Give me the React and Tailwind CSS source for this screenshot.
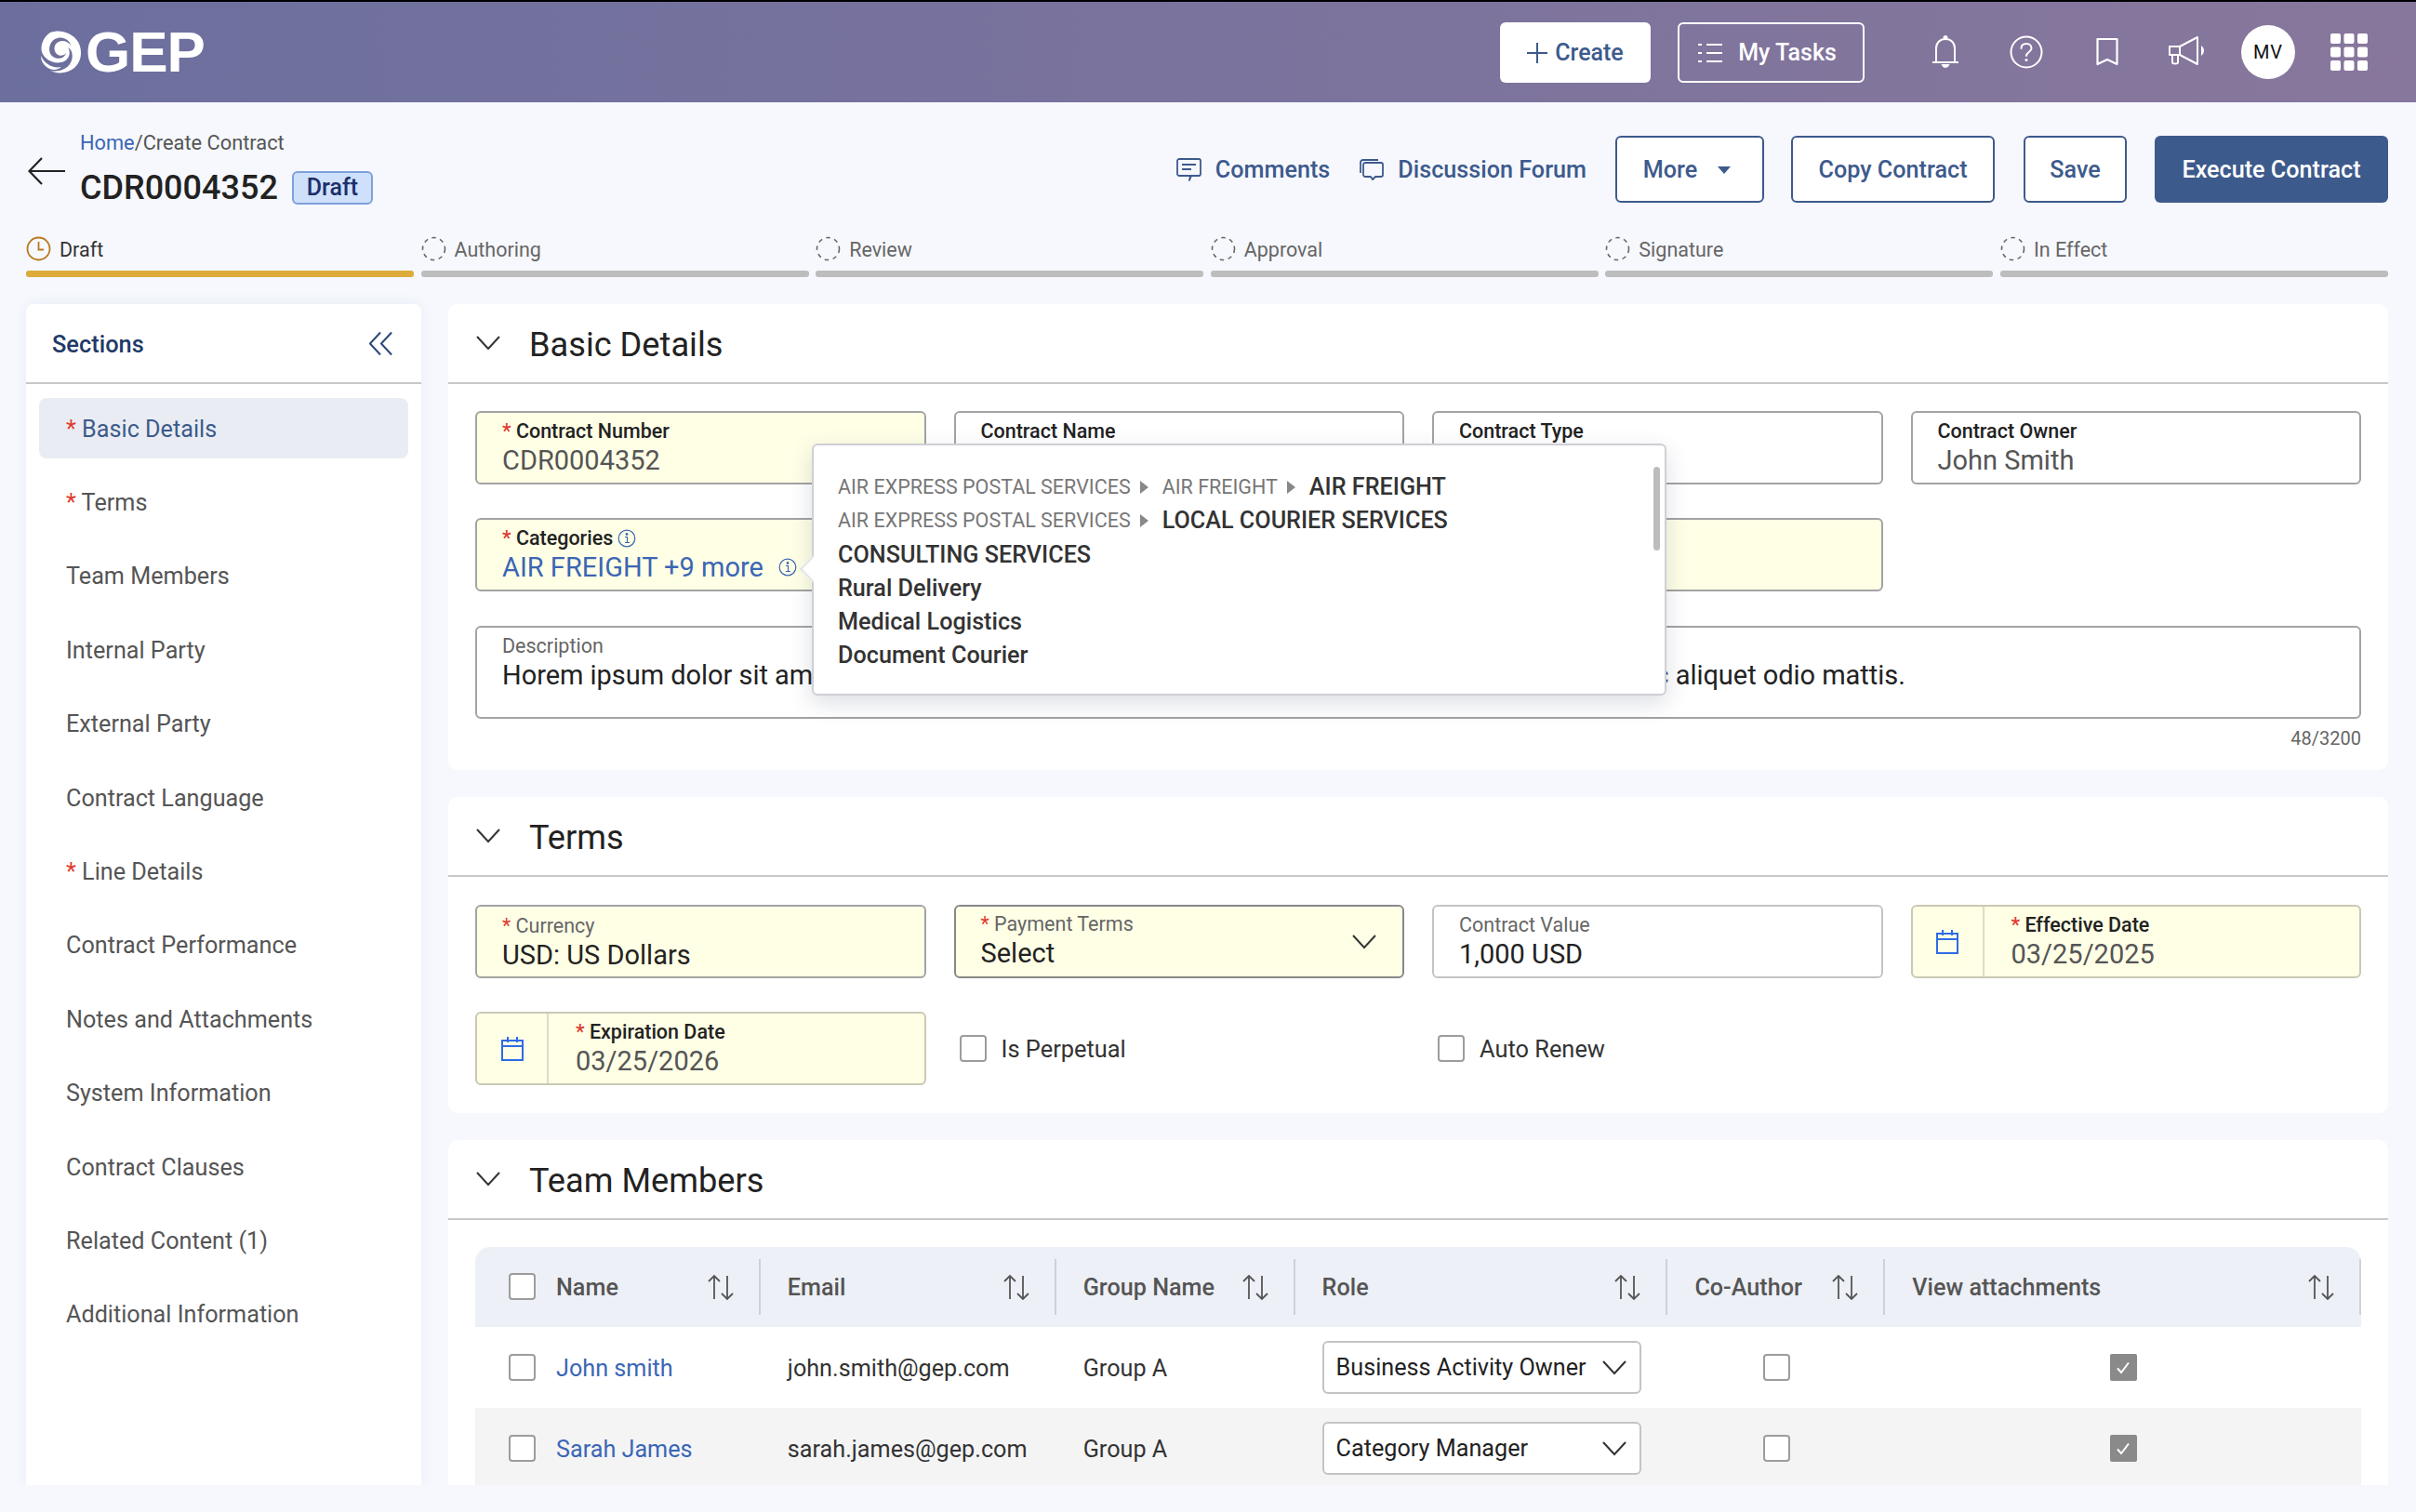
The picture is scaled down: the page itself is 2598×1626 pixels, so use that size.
const sections = [
  { name: 'Basic Details', req: true, active: true },
  { name: 'Terms', req: true },
  { name: 'Team Members' },
  { name: 'Internal Party' },
  { name: 'External Party' },
  { name: 'Contract Language' },
  { name: 'Line Details', req: true },
  { name: 'Contract Performance' },
  { name: 'Notes and Attachments' },
  { name: 'System Information' },
  { name: 'Contract Clauses' },
  { name: 'Related Content (1)' },
  { name: 'Additional Information' },
];

const steps = ['Draft', 'Authoring', 'Review', 'Approval', 'Signature', 'In Effect'];

const GepSwirl = () => (
  <svg width="46" height="46" viewBox="0 0 46 46" fill="#fff">
    <path d="M12 2 C22 -2 36 2 42 12 C47 21 46 33 38 40 C31 46 20 47 12 43 C22 45 32 41 35 32 C37 26 35 20 31 18 C35 24 32 32 24 34 C15 36 6 31 3 23 C1 16 5 6 12 2 Z" />
    <path d="M2 27 C6 36 15 41 24 39 C19 43 13 43 8 39 C4 36 2 32 2 27 Z" />
    <path d="M17 9 C24 5 33 9 34 16 C31 11 25 10 21 12 C16 14 15 21 19 25 C22 28 27 27 29 24 C28 29 21 32 15 28 C9 24 10 13 17 9 Z" fill="#6f7099" />
    <path d="M23 15 C27 14 30 17 29 21 C28 24 24 25 21 23 C24 24 26 22 26 20 C26 17 24 16 21 17 C21 16 22 15 23 15 Z" />
  </svg>
);

const Bell = () => (
  <svg width="28" height="36" viewBox="0 0 28 36" fill="none" stroke="#fff" strokeWidth="2">
    <path d="M0 29 H28" strokeLinecap="round" />
    <path d="M4 29 V14 C4 8 8 4 14 4 C20 4 24 8 24 14 V29" />
    <circle cx="14" cy="2.5" r="1.5" fill="#fff" />
    <path d="M11 32 H17 C16 34.500 12 34.500 11 32 Z" fill="#fff" />
  </svg>
);

const Help = () => (
  <svg width="36" height="36" viewBox="0 0 36 36" fill="none" stroke="#fff" strokeWidth="2">
    <circle cx="18" cy="18" r="16.500" />
    <path d="M12.500 14 C12.500 10.500 15 9 18 9 C21 9 23.500 11 23.500 14 C23.500 18 18 18 18 22" strokeLinecap="round" />
    <circle cx="18" cy="26.500" r="1.500" fill="#fff" stroke="none" />
  </svg>
);

const BookmarkIcon = () => (
  <svg width="24" height="32" viewBox="0 0 24 32" fill="none" stroke="#fff" strokeWidth="2.200">
    <path d="M1.500 2 H22.500 V29 L12 24 L1.500 29 Z" strokeLinejoin="round" />
  </svg>
);

const Megaphone = () => (
  <svg width="40" height="34" viewBox="0 0 40 34" fill="none" stroke="#fff" strokeWidth="2">
    <path d="M1 11 H12 L31 1 V30 L12 20 H1 Z" strokeLinejoin="round" />
    <path d="M12 11 V20" />
    <path d="M4 20 V28 C4 30 10 30 10 28 V21" />
    <path d="M35 10 C39 13 39 18 35 21 Z" fill="#fff" stroke="none" />
  </svg>
);

const Apps = () => (
  <svg width="40" height="40" viewBox="0 0 40 40" fill="#fff">
    <rect x="0" y="0" width="11" height="11" rx="2" />
    <rect x="14.500" y="0" width="11" height="11" rx="2" />
    <rect x="29" y="0" width="11" height="11" rx="2" />
    <rect x="0" y="14.500" width="11" height="11" rx="2" />
    <rect x="14.500" y="14.500" width="11" height="11" rx="2" />
    <rect x="29" y="14.500" width="11" height="11" rx="2" />
    <rect x="0" y="29" width="11" height="11" rx="2" />
    <rect x="14.500" y="29" width="11" height="11" rx="2" />
    <rect x="29" y="29" width="11" height="11" rx="2" />
  </svg>
);

const TaskList = () => (
  <svg width="26" height="22" viewBox="0 0 26 22" fill="none" stroke="#fff" strokeWidth="2">
    <path d="M0 2 H4 M0 11 H4 M0 20 H4" />
    <path d="M9 2 H26 M9 11 H26 M9 20 H26" />
  </svg>
);

const CommentIcon = () => (
  <svg width="27" height="25" viewBox="0 0 27 25" fill="none" stroke="#3d5a8c" strokeWidth="1.800">
    <path d="M3 1 H24 C25 1 26 2 26 3 V17 C26 18 25 19 24 19 H16 L14 24 L15 19 H3 C2 19 1 18 1 17 V3 C1 2 2 1 3 1 Z" strokeLinejoin="round" />
    <path d="M6 7 H21 M6 12 H16" />
  </svg>
);

const ForumIcon = () => (
  <svg width="26" height="24" viewBox="0 0 26 24" fill="none" stroke="#3d5a8c" strokeWidth="1.800">
    <path d="M1 15 V4 C1 2 2 1 4 1 H20" />
    <path d="M6 4 H23 C24 4 25 5 25 6 V17 C25 18 24 19 23 19 H17 L14 22 L12 19 H6 C5 19 4 18 4 17 V6 C4 5 5 4 6 4 Z" strokeLinejoin="round" />
  </svg>
);

const StepIcon = ({ done }) =>
  done ? (
    <svg width="27" height="27" viewBox="0 0 27 27" fill="none" stroke="#b9791f" strokeWidth="1.800">
      <circle cx="13.500" cy="13.500" r="12" />
      <path d="M13.500 6 V14.500 H19" />
    </svg>
  ) : (
    <svg width="27" height="27" viewBox="0 0 27 27" fill="none" stroke="#666" strokeWidth="1.600">
      <circle cx="13.500" cy="13.500" r="12" strokeDasharray="4.500 4.500" />
    </svg>
  );

const InfoIcon = () => (
  <svg width="20" height="20" viewBox="0 0 20 20" fill="none" stroke="#3b66b5" strokeWidth="1.200">
    <circle cx="10" cy="10" r="8.800" />
    <path d="M8 8.500 H10.500 V14.500 M8 14.500 H13" />
    <circle cx="10" cy="5.500" r="0.800" fill="#3b66b5" />
  </svg>
);

const CalendarIcon = () => (
  <svg width="24" height="26" viewBox="0 0 24 26" fill="none" stroke="#2f6be6" strokeWidth="2">
    <rect x="1" y="4" width="22" height="21" />
    <path d="M1 10 H23 M7 0 V6 M17 0 V6" />
  </svg>
);

const SortIcon = () => (
  <svg width="28" height="27" viewBox="0 0 28 27" fill="none" stroke="#555" strokeWidth="1.800" className="shrink-0">
    <path d="M7 26 V1 M1 7 L7 1 L13 7" />
    <path d="M21 1 V26 M15 20 L21 26 L27 20" />
  </svg>
);

const Chevron = ({ className }) => (
  <svg width="26" height="16" viewBox="0 0 26 16" fill="none" stroke="#333" strokeWidth="2" className={className}>
    <path d="M1 1 L13 14 L25 1" />
  </svg>
);

const Check = ({ checked }) =>
  checked ? (
    <span className="flex h-[29px] w-[29px] items-center justify-center rounded-[2px] bg-[#8a8a8a]">
      <svg width="16" height="14" viewBox="0 0 16 14" fill="none" stroke="#fff" strokeWidth="2">
        <path d="M2 7.500 L6 12 L14 1.500" />
      </svg>
    </span>
  ) : (
    <span className="block h-[29px] w-[29px] rounded-[4px] border-2 border-[#9c9c9c] bg-white" />
  );

const Req = () => <span className="text-[#e03a2f]">* </span>;

const Triangle = () => (
  <span className="ml-[10px] mr-[15px] h-0 w-0 border-y-[7px] border-l-[9px] border-y-transparent border-l-[#888]" />
);

const Field = ({ label, value, req, yellow, strongLabel, muted, children, className = '' }) => (
  <div
    className={`h-[79px] rounded-[6px] border-2 border-[#a3a3a3] px-[27px] pt-[8px] ${
      yellow ? 'bg-[#ffffe6]' : 'bg-white'
    } ${className}`}
  >
    <div className={`flex items-center gap-[5px] text-[21.500px] leading-[24px] ${strongLabel ? 'font-medium text-[#222]' : 'text-[#666]'}`}>
      <span>
        {req && <Req />}
        {label}
      </span>
      {label === 'Categories' && <InfoIcon />}
    </div>
    {children || (
      <div className={`mt-[3px] text-[29px] leading-[32px] ${muted ? 'text-[#555]' : 'text-[#222]'}`}>{value}</div>
    )}
  </div>
);

const DateField = ({ label, value, className = '' }) => (
  <div className={`flex h-[79px] rounded-[6px] border-2 border-[#c9c9b5] bg-[#ffffe6] ${className}`}>
    <div className="flex w-[77px] shrink-0 items-center justify-center border-r-2 border-[#dcdcc8]">
      <CalendarIcon />
    </div>
    <div className="pl-[29px] pt-[8px]">
      <div className="text-[21.500px] font-medium leading-[24px] text-[#222]">
        <Req />
        {label}
      </div>
      <div className="mt-[3px] text-[29px] leading-[32px] text-[#555]">{value}</div>
    </div>
  </div>
);

const CardHeader = ({ title }) => (
  <div className="flex h-[86px] items-center gap-[30px] border-b-2 border-[#c8c8c8] pl-[29px]">
    <Chevron className="w-[28px]" />
    <h2 className="pt-[5px] text-[36.200px] font-normal leading-none text-[#222]">{title}</h2>
  </div>
);

const HeadCell = ({ label, className = '', check }) => (
  <div className={`flex h-full items-center ${className}`}>
    <div className="flex h-[60px] w-full items-center justify-between border-r-2 border-[#cdd1d9] pr-[27px]">
      <div className="flex items-center gap-[22px] text-[25.200px] font-medium text-[#555]">
        {check && <Check />}
        <span className="pt-[2px]">{label}</span>
      </div>
      <SortIcon />
    </div>
  </div>
);

const RoleSelect = ({ value }) => (
  <div className="flex h-[57px] w-[343px] items-center justify-between rounded-[6px] border-2 border-[#c4c4c4] bg-white pl-[13px] pr-[14px] text-[25.200px] text-[#222]">
    {value}
    <Chevron />
  </div>
);

const Row = ({ name, email, role, striped }) => (
  <div className={`flex h-[87px] items-center text-[25.200px] text-[#333] ${striped ? 'bg-[#f4f4f5]' : 'bg-white'}`}>
    <div className="flex w-[307px] items-center gap-[22px] pl-[36px]">
      <Check />
      <span className="pt-[2px] text-[#3b66b5]">{name}</span>
    </div>
    <div className="w-[318px] pl-[29px] pt-[2px]">{email}</div>
    <div className="w-[257px] pl-[29px] pt-[2px]">Group A</div>
    <div className="w-[401px] pl-[29px]">
      <RoleSelect value={role} />
    </div>
    <div className="flex w-[234px] justify-center">
      <Check />
    </div>
    <div className="flex w-[512px] justify-center">
      <Check checked />
    </div>
  </div>
);

const Popover = () => (
  <div className="absolute left-[391px] top-[150px] z-10 h-[271px] w-[919px] rounded-[6px] border-2 border-[#cfcfd4] bg-white pl-[26px] pt-[27px] shadow-[0_8px_24px_rgba(60,70,100,0.18)]">
    <div className="absolute -left-[11px] top-[123px] h-[20px] w-[20px] rotate-45 border-b-2 border-l-2 border-[#e4e4e8] bg-white" />
    <div className="absolute right-[5px] top-[23px] h-[90px] w-[7px] rounded-full bg-[#bdbdbd]" />
    <div className="relative flex flex-col text-[25.200px] font-medium leading-[36.300px] text-[#333]">
      <div className="flex items-center">
        <span className="text-[21.500px] font-normal text-[#777]">AIR EXPRESS POSTAL SERVICES</span>
        <Triangle />
        <span className="text-[21.500px] font-normal text-[#777]">AIR FREIGHT</span>
        <Triangle />
        AIR FREIGHT
      </div>
      <div className="flex items-center">
        <span className="text-[21.500px] font-normal text-[#777]">AIR EXPRESS POSTAL SERVICES</span>
        <Triangle />
        LOCAL COURIER SERVICES
      </div>
      <div>CONSULTING SERVICES</div>
      <div>Rural Delivery</div>
      <div>Medical Logistics</div>
      <div>Document Courier</div>
    </div>
  </div>
);

const App = () => (
  <div className="flex h-[1626px] w-[2598px] flex-col overflow-hidden bg-[#f6f8fd] font-['Roboto',sans-serif]">
    <header className="flex h-[110px] shrink-0 items-center border-t-2 border-black bg-gradient-to-r from-[#6c6f9e] to-[#88779c] pl-[42px]">
      <div className="flex items-center gap-[4px]">
        <GepSwirl />
        <span className="font-['Liberation_Sans',sans-serif] text-[62px] font-bold leading-none tracking-[-1px] text-white">
          GEP
        </span>
      </div>
      <div className="ml-auto flex items-center">
        <button className="flex h-[65px] w-[162px] items-center justify-center gap-[8px] rounded-[6px] bg-white pt-[2px] text-[25px] font-medium text-[#3d5a8c]">
          <svg width="22" height="22" viewBox="0 0 22 22" stroke="#3d5a8c" strokeWidth="2">
            <path d="M11 0 V22 M0 11 H22" />
          </svg>
          Create
        </button>
        <button className="ml-[29px] flex h-[65px] w-[201px] items-center justify-center gap-[17px] rounded-[6px] border-2 border-white pr-[8px] pt-[2px] text-[25px] font-medium text-white">
          <TaskList />
          My Tasks
        </button>
        <div className="ml-[69px] flex w-[36px] justify-center">
          <Bell />
        </div>
        <div className="ml-[51px] flex w-[36px] justify-center">
          <Help />
        </div>
        <div className="ml-[51px] flex w-[36px] justify-center">
          <BookmarkIcon />
        </div>
        <div className="ml-[48px] flex w-[40px] justify-center">
          <Megaphone />
        </div>
        <div className="ml-[38px] flex h-[58px] w-[58px] items-center justify-center rounded-full bg-white text-[20px] tracking-[1px] text-[#111]">
          MV
        </div>
        <div className="ml-[38px] mr-[52px]">
          <Apps />
        </div>
      </div>
    </header>

    <div className="flex h-[108px] shrink-0 items-start pl-[30px] pr-[30px]">
      <svg width="40" height="32" viewBox="0 0 40 32" fill="none" stroke="#222" strokeWidth="2.200" className="mt-[58px] shrink-0">
        <path d="M40 16 H2 M15 2 L1.500 16 L15 30" />
      </svg>
      <div className="ml-[16px] mt-[31px]">
        <div className="text-[21.800px] leading-[26px] text-[#555]">
          <span className="text-[#3b66b5]">Home</span>/Create Contract
        </div>
        <div className="mt-[17px] flex items-center gap-[15px]">
          <span className="text-[36px] font-medium leading-[36px] text-[#222]">CDR0004352</span>
          <span className="flex h-[36px] w-[87px] items-center justify-center rounded-[6px] border-2 border-[#7fa0dc] bg-[#cfe0fb] text-[25px] font-medium text-[#1d2f6b]">
            Draft
          </span>
        </div>
      </div>
      <div className="ml-auto mt-[36px] flex items-center text-[25.200px] font-medium">
        <div className="flex items-center gap-[15px] pt-[2px] text-[#3d5a8c]">
          <CommentIcon />
          Comments
        </div>
        <div className="ml-[32px] flex items-center gap-[15px] pt-[2px] text-[#3d5a8c]">
          <ForumIcon />
          Discussion Forum
        </div>
        <button className="ml-[31px] flex h-[72px] w-[160px] items-center justify-center gap-[22px] rounded-[6px] border-2 border-[#3d5a8c] bg-white pr-[6px] pt-[2px] text-[#3d5a8c]">
          More
          <span className="h-0 w-0 border-x-[7px] border-t-[8px] border-x-transparent border-t-[#3d5a8c]" />
        </button>
        <button className="ml-[29px] flex h-[72px] w-[219px] items-center justify-center rounded-[6px] border-2 border-[#3d5a8c] bg-white pt-[2px] text-[#3d5a8c]">
          Copy Contract
        </button>
        <button className="ml-[31px] flex h-[72px] w-[111px] items-center justify-center rounded-[6px] border-2 border-[#3d5a8c] bg-white pt-[2px] text-[#3d5a8c]">
          Save
        </button>
        <button className="ml-[30px] flex h-[72px] w-[251px] items-center justify-center rounded-[6px] bg-[#3d5a8c] pt-[2px] text-white">
          Execute Contract
        </button>
      </div>
    </div>

    <div className="grid h-[80px] shrink-0 grid-cols-6 gap-x-[7.500px] pl-[28px] pr-[30px] pt-[36px]">
      {steps.map((step, i) => (
        <div key={step}>
          <div className="flex h-[37px] items-start gap-[9px] text-[21.500px] leading-[30px]">
            <StepIcon done={i === 0} />
            <span className={i === 0 ? 'text-[#333]' : 'text-[#666]'}>{step}</span>
          </div>
          <div className={`h-[7px] rounded-[3px] ${i === 0 ? 'bg-[#dcab3a]' : 'bg-[#bdbdbd]'}`} />
        </div>
      ))}
    </div>

    <div className="flex h-[1299px] shrink-0 gap-[29px] overflow-hidden pl-[28px] pr-[30px] pt-[29px]">
      <aside className="h-[1270px] w-[425px] shrink-0 rounded-t-[8px] bg-white shadow-[0_0_14px_rgba(120,140,200,0.1)]">
        <div className="flex h-[86px] items-center justify-between border-b-2 border-[#c8c8c8] pl-[28px] pr-[31px]">
          <span className="pt-[3px] text-[25.400px] font-medium text-[#1f3a68]">Sections</span>
          <svg width="25" height="27" viewBox="0 0 27 28" fill="none" stroke="#2f4a78" strokeWidth="2.200">
            <path d="M13 1 L1 14 L13 27 M26 1 L14 14 L26 27" />
          </svg>
        </div>
        <nav className="flex flex-col gap-[14.400px] px-[14px] pt-[15px]">
          {sections.map((s) => (
            <div
              key={s.name}
              className={`flex h-[65px] items-center rounded-[8px] pl-[29px] pt-[2px] text-[25.200px] ${
                s.active ? 'bg-[#e9edf3] text-[#3d5a8c]' : 'text-[#555]'
              }`}
            >
              <span>
                {s.req && <Req />}
                {s.name}
              </span>
            </div>
          ))}
        </nav>
      </aside>

      <main className="flex min-w-0 flex-1 flex-col gap-[29px]">
        <section className="relative h-[501px] shrink-0 rounded-[10px] bg-white">
          <CardHeader title="Basic Details" />
          <div className="px-[29px] pt-[29px]">
            <div className="grid grid-cols-4 gap-x-[30px] gap-y-[36px]">
              <Field label="Contract Number" value="CDR0004352" req yellow strongLabel muted />
              <Field label="Contract Name" strongLabel />
              <Field label="Contract Type" strongLabel />
              <Field label="Contract Owner" value="John Smith" strongLabel muted />
              <Field label="Categories" req yellow strongLabel>
                <div className="mt-[3px] flex items-center text-[29px] leading-[32px] text-[#3b66b5]">
                  AIR FREIGHT +9 more
                  <span className="ml-[16px]">
                    <InfoIcon />
                  </span>
                </div>
              </Field>
              <Field label="" yellow />
              <Field label="" yellow />
            </div>
            <div className="mt-[37px] h-[100px] rounded-[6px] border-2 border-[#a3a3a3] px-[27px] pt-[8px]">
              <div className="text-[21.500px] leading-[24px] text-[#666]">Description</div>
              <div className="mt-[3px] text-[29px] leading-[32px] tracking-[-0.04px] text-[#222]">
                Horem ipsum dolor sit amet, consectetur adipiscing elit. Nunc vulputate libero et velit interdum, ac aliquet odio mattis.
              </div>
            </div>
            <div className="mt-[6px] text-right text-[20px] text-[#666]">48/3200</div>
          </div>
          <Popover />
        </section>

        <section className="h-[340px] shrink-0 rounded-[10px] bg-white">
          <CardHeader title="Terms" />
          <div className="grid grid-cols-4 gap-x-[30px] gap-y-[36px] px-[29px] pt-[30px]">
            <Field label="Currency" value="USD: US Dollars" req yellow className="!pt-[9px]" />
            <div className="relative">
              <Field label="Payment Terms" value="Select" req yellow className="!border-[#888] !pt-[7px]" />
              <Chevron className="absolute right-[30px] top-[32px]" />
            </div>
            <Field label="Contract Value" value="1,000 USD" className="!border-[#c4c4c4]" />
            <DateField label="Effective Date" value="03/25/2025" />
            <DateField label="Expiration Date" value="03/25/2026" />
            <label className="flex h-[79px] items-center gap-[16px] pl-[6px] text-[25.400px] text-[#333]">
              <Check />
              <span className="pt-[2px]">Is Perpetual</span>
            </label>
            <label className="flex h-[79px] items-center gap-[16px] pl-[6px] text-[25.400px] text-[#333]">
              <Check />
              <span className="pt-[2px]">Auto Renew</span>
            </label>
          </div>
        </section>

        <section className="shrink-0 rounded-t-[10px] bg-white">
          <CardHeader title="Team Members" />
          <div className="mx-[29px] mt-[29px] overflow-hidden rounded-t-[16px]">
            <div className="flex h-[86px] items-center bg-[#edf0f7]">
              <HeadCell label="Name" check className="w-[307px] pl-[36px]" />
              <HeadCell label="Email" className="w-[318px] pl-[29px]" />
              <HeadCell label="Group Name" className="w-[257px] pl-[29px]" />
              <HeadCell label="Role" className="w-[401px] pl-[29px]" />
              <HeadCell label="Co-Author" className="w-[234px] pl-[29px]" />
              <HeadCell label="View attachments" className="w-[512px] pl-[29px]" />
            </div>
            <Row name="John smith" email="john.smith@gep.com" role="Business Activity Owner" />
            <Row name="Sarah James" email="sarah.james@gep.com" role="Category Manager" striped />
          </div>
        </section>
      </main>
    </div>
  </div>
);

export default App;
